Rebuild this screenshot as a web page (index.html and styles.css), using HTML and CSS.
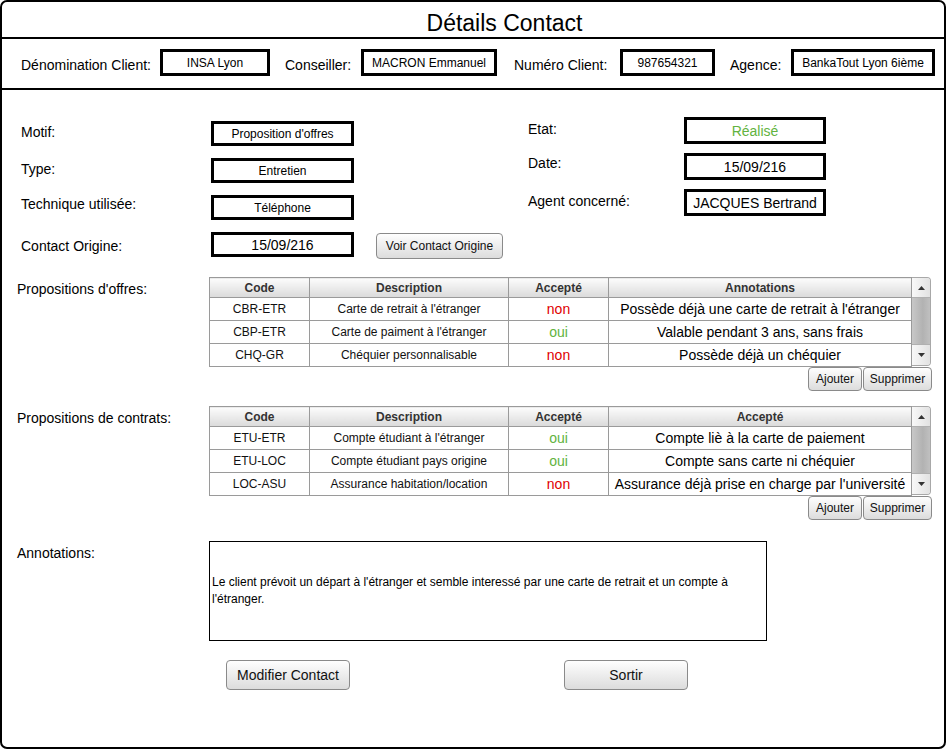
FILE: index.html
```html
<!DOCTYPE html>
<html lang="fr">
<head>
<meta charset="utf-8">
<title>Détails Contact</title>
<link rel="stylesheet" href="styles.css">
</head>
<body>
<div class="frame">
  <div class="title-bar"><h1 class="title">Détails Contact</h1></div>

  <div class="info-bar">
    <span class="lbl info-l1">Dénomination Client:</span>
    <span class="box info-box w-client">INSA Lyon</span>
    <span class="lbl info-l2">Conseiller:</span>
    <span class="box info-box w-cons">MACRON Emmanuel</span>
    <span class="lbl info-l3">Numéro Client:</span>
    <span class="box info-box w-num">987654321</span>
    <span class="lbl info-l4">Agence:</span>
    <span class="box info-box w-ag">BankaTout Lyon 6ième</span>
  </div>

  <div class="main">
    <div class="form">
      <div class="form-left">
        <span class="lbl flbl">Motif:</span>
        <span class="box fbox">Proposition d'offres</span>
        <span></span>

        <span class="lbl flbl">Type:</span>
        <span class="box fbox">Entretien</span>
        <span></span>

        <span class="lbl flbl flbl-up">Technique utilisée:</span>
        <span class="box fbox">Téléphone</span>
        <span></span>

        <span class="lbl flbl flbl-down">Contact Origine:</span>
        <span class="box fbox big">15/09/216</span>
        <button class="btn btn-sm btn-voir">Voir Contact Origine</button>
      </div>

      <div class="form-right">
        <span class="lbl flbl">Etat:</span>
        <span class="box rbox big green">Réalisé</span>

        <span class="lbl flbl flbl-up">Date:</span>
        <span class="box rbox big">15/09/216</span>

        <span class="lbl flbl">Agent concerné:</span>
        <span class="box rbox big">JACQUES Bertrand</span>
      </div>
    </div>

    <div class="table-block block-offres">
      <span class="lbl tlbl">Propositions d'offres:</span>
      <div class="table-area">
        <div class="grid-wrap">
          <table class="grid">
            <colgroup>
              <col class="c-code"><col class="c-desc"><col class="c-acc"><col class="c-ann">
            </colgroup>
            <thead>
              <tr><th>Code</th><th>Description</th><th>Accepté</th><th>Annotations</th></tr>
            </thead>
            <tbody>
              <tr><td>CBR-ETR</td><td>Carte de retrait à l'étranger</td><td class="acc no">non</td><td class="ann">Possède déjà une carte de retrait à l'étranger</td></tr>
              <tr><td>CBP-ETR</td><td>Carte de paiment à l'étranger</td><td class="acc yes">oui</td><td class="ann">Valable pendant 3 ans, sans frais</td></tr>
              <tr><td>CHQ-GR</td><td>Chéquier personnalisable</td><td class="acc no">non</td><td class="ann">Possède déjà un chéquier</td></tr>
            </tbody>
          </table>
          <div class="scrollbar">
            <div class="sb-btn sb-up"><svg width="7" height="4" viewBox="0 0 7 4"><path d="M3.5 0 L7 4 L0 4 Z" fill="#333"/></svg></div>
            <div class="sb-thumb"></div>
            <div class="sb-btn sb-down"><svg width="7" height="4" viewBox="0 0 7 4"><path d="M0 0 L7 0 L3.5 4 Z" fill="#333"/></svg></div>
          </div>
        </div>
        <div class="tbl-actions">
          <button class="btn btn-sm btn-add">Ajouter</button>
          <button class="btn btn-sm btn-del">Supprimer</button>
        </div>
      </div>
    </div>

    <div class="table-block block-contrats">
      <span class="lbl tlbl">Propositions de contrats:</span>
      <div class="table-area">
        <div class="grid-wrap">
          <table class="grid">
            <colgroup>
              <col class="c-code"><col class="c-desc"><col class="c-acc"><col class="c-ann">
            </colgroup>
            <thead>
              <tr><th>Code</th><th>Description</th><th>Accepté</th><th>Accepté</th></tr>
            </thead>
            <tbody>
              <tr><td>ETU-ETR</td><td>Compte étudiant à l'étranger</td><td class="acc yes">oui</td><td class="ann">Compte liè à la carte de paiement</td></tr>
              <tr><td>ETU-LOC</td><td>Compte étudiant pays origine</td><td class="acc yes">oui</td><td class="ann">Compte sans carte ni chéquier</td></tr>
              <tr><td>LOC-ASU</td><td>Assurance habitation/location</td><td class="acc no">non</td><td class="ann">Assurance déjà prise en charge par l'université</td></tr>
            </tbody>
          </table>
          <div class="scrollbar">
            <div class="sb-btn sb-up"><svg width="7" height="4" viewBox="0 0 7 4"><path d="M3.5 0 L7 4 L0 4 Z" fill="#333"/></svg></div>
            <div class="sb-thumb"></div>
            <div class="sb-btn sb-down"><svg width="7" height="4" viewBox="0 0 7 4"><path d="M0 0 L7 0 L3.5 4 Z" fill="#333"/></svg></div>
          </div>
        </div>
        <div class="tbl-actions">
          <button class="btn btn-sm btn-add">Ajouter</button>
          <button class="btn btn-sm btn-del">Supprimer</button>
        </div>
      </div>
    </div>

    <div class="notes-block">
      <span class="lbl nlbl">Annotations:</span>
      <div class="notes">Le client prévoit un départ à l'étranger et semble interessé par une carte de retrait et un compte à l'étranger.</div>
    </div>

    <div class="actions">
      <button class="btn btn-lg btn-mod">Modifier Contact</button>
      <button class="btn btn-lg btn-out">Sortir</button>
    </div>
  </div>
</div>
</body>
</html>
```

FILE: styles.css
```css
* { box-sizing: border-box; }

html, body {
  margin: 0;
  padding: 0;
  background: #fff;
}

body {
  font-family: "Liberation Sans", Arial, sans-serif;
  color: #000;
}

.frame {
  width: 946px;
  height: 749px;
  border: 2px solid #000;
  border-radius: 7px;
  overflow: hidden;
  background: #fff;
}

/* Title */
.title-bar {
  height: 37px;
  border-bottom: 2px solid #000;
  display: flex;
  align-items: center;
  justify-content: center;
  padding-left: 63px;
  padding-top: 7px;
}

.title {
  margin: 0;
  font-size: 23px;
  font-weight: normal;
  line-height: 1;
}

/* Info bar */
.info-bar {
  height: 51px;
  border-bottom: 2px solid #000;
  display: flex;
  align-items: center;
  padding-left: 19px;
}

.lbl {
  font-size: 14px;
  white-space: nowrap;
}

.info-bar .lbl { padding-top: 3px; }

.info-l1 { width: 139px; }
.info-l2 { width: 76px; margin-left: 15px; }
.info-l3 { width: 106px; margin-left: 17px; }
.info-l4 { width: 61px; margin-left: 15px; }

.box {
  border: 3px solid #000;
  background: #fff;
  display: flex;
  align-items: center;
  justify-content: center;
  font-size: 12px;
  white-space: nowrap;
  overflow: hidden;
}

.info-box { height: 27px; margin-top: -2px; }
.w-client { width: 110px; }
.w-cons { width: 136px; }
.w-num { width: 95px; }
.w-ag { width: 144px; }

.big { font-size: 14px; }
.green { color: #62b340; }

/* Form */
.form {
  display: flex;
  align-items: flex-start;
  padding-left: 19px;
}

.form-left {
  display: grid;
  grid-template-columns: 190px 143px 149px;
  grid-auto-rows: 25px;
  row-gap: 12px;
  padding-top: 31px;
  width: 482px;
}

.form-right {
  display: grid;
  grid-template-columns: 156px 142px;
  grid-auto-rows: 27px;
  row-gap: 9px;
  padding-top: 27px;
  margin-left: 25px;
}

.flbl {
  align-self: center;
  padding-bottom: 4px;
}

.flbl-up { padding-bottom: 8px; }
.flbl-down { padding-bottom: 0; padding-top: 2px; }

.fbox { height: 25px; }
.rbox { height: 27px; }

/* Buttons */
.btn {
  font-family: "Liberation Sans", Arial, sans-serif;
  color: #111;
  background: linear-gradient(#fefefe, #dcdcdc);
  border: 1px solid #8a8a8a;
  border-radius: 4px;
  padding: 0;
  margin: 0;
  white-space: nowrap;
}

.btn-sm { font-size: 12px; height: 25px; }
.btn-lg { font-size: 14px; height: 30px; }

.btn-voir {
  width: 127px;
  height: 26px;
  margin-left: 22px;
  align-self: start;
  margin-top: 1px;
}

/* Tables */
.table-block {
  display: flex;
  padding-left: 15px;
}

.block-offres { margin-top: 20px; }
.block-contrats { margin-top: 15px; }

.tlbl {
  width: 192px;
  padding-top: 4px;
}

.table-area {
  width: 723px;
  display: flex;
  flex-direction: column;
}

.grid-wrap {
  display: flex;
  width: 722px;
  height: 89px;
}

.grid {
  width: 702px;
  border-collapse: collapse;
  table-layout: fixed;
  border: 1px solid #9a9a9a;
}

.c-code { width: 100px; }
.c-desc { width: 199px; }
.c-acc { width: 100px; }
.c-ann { width: 303px; }

.grid th {
  height: 20px;
  padding: 0;
  font-size: 12px;
  font-weight: bold;
  color: #333;
  background: linear-gradient(#fcfcfc, #dadada);
  border: 1px solid #9a9a9a;
  text-align: center;
}

.grid td {
  height: 23px;
  padding: 0;
  font-size: 12px;
  color: #111;
  border: 1px solid #9a9a9a;
  text-align: center;
  white-space: nowrap;
  overflow: hidden;
}

.grid td.acc { font-size: 14px; }
.grid td.ann { font-size: 14px; color: #000; }
.grid td.no { color: #e00000; }
.grid td.yes { color: #62b340; }

.scrollbar {
  width: 20px;
  height: 89px;
  border: 1px solid #a8a8a8;
  border-left: none;
  border-radius: 0 4px 4px 0;
  display: flex;
  flex-direction: column;
  overflow: hidden;
  background: #f4f4f4;
}

.sb-btn {
  display: flex;
  align-items: center;
  justify-content: center;
  background: linear-gradient(90deg, #f8f8f8, #e2e2e2);
}

.sb-up { height: 20px; border-bottom: 1px solid #b0b0b0; }
.sb-down { height: 21px; border-top: 1px solid #b0b0b0; }

.sb-thumb {
  flex: 1;
  background: linear-gradient(90deg, #c8c8c8, #b2b2b2 60%, #c0c0c0);
}

.tbl-actions {
  display: flex;
  justify-content: flex-end;
  gap: 1px;
  margin-top: 1px;
}

.btn-add { width: 54px; height: 24px; }
.btn-del { width: 69px; height: 24px; }

/* Notes */
.notes-block {
  display: flex;
  padding-left: 15px;
  margin-top: 21px;
}

.nlbl {
  width: 192px;
  padding-top: 4px;
}

.notes {
  width: 558px;
  height: 100px;
  border: 1px solid #000;
  font-size: 12px;
  line-height: 17px;
  padding: 0 20px 0 2px;
  display: flex;
  align-items: center;
}

/* Bottom actions */
.actions {
  display: flex;
  margin-top: 19px;
  padding-left: 224px;
}

.btn-mod { width: 124px; }
.btn-out { width: 124px; margin-left: 214px; }
```
